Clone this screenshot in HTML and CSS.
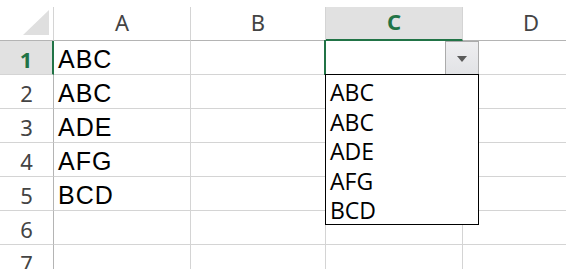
FILE: index.html
```html
<!DOCTYPE html>
<html lang="en">
<head>
  <meta charset="UTF-8" />
  <title>Dropdown list</title>
  <link rel="stylesheet" href="styles.css">
</head>
<body>

<div class="sheet">
  <div class="corner">
    <svg width="27" height="26" viewBox="0 0 27 26"><polygon points="26,0 26,25 0,25" fill="#dfdfdf"/></svg>
  </div>
  <div class="colh">A</div>
  <div class="colh">B</div>
  <div class="colh on">C</div>
  <div class="colh last">D</div>

  <div class="rowh on">1</div>
  <div class="cell">ABC</div>
  <div class="cell"></div>
  <div class="cell active">
    <div class="dd-btn">
      <svg width="10" height="6" viewBox="0 0 10 6"><polygon points="0,0 10,0 5,6" fill="#5a5a5a"/></svg>
    </div>
    <ul class="dd-list">
      <li>ABC</li>
      <li>ABC</li>
      <li>ADE</li>
      <li>AFG</li>
      <li>BCD</li>
    </ul>
  </div>
  <div class="cell last"></div>

  <div class="rowh">2</div>
  <div class="cell">ABC</div>
  <div class="cell"></div>
  <div class="cell"></div>
  <div class="cell last"></div>

  <div class="rowh">3</div>
  <div class="cell">ADE</div>
  <div class="cell"></div>
  <div class="cell"></div>
  <div class="cell last"></div>

  <div class="rowh">4</div>
  <div class="cell">AFG</div>
  <div class="cell"></div>
  <div class="cell"></div>
  <div class="cell last"></div>

  <div class="rowh">5</div>
  <div class="cell">BCD</div>
  <div class="cell"></div>
  <div class="cell"></div>
  <div class="cell last"></div>

  <div class="rowh">6</div>
  <div class="cell"></div>
  <div class="cell"></div>
  <div class="cell"></div>
  <div class="cell last"></div>

  <div class="rowh">7</div>
  <div class="cell"></div>
  <div class="cell"></div>
  <div class="cell"></div>
  <div class="cell last"></div>
</div>

</body>
</html>
```

FILE: styles.css
```css
body { margin: 0; padding-top: 7px; background: #fff; overflow: hidden; }
.sheet { display: grid; grid-template-columns: 54px 137px 135px 137px 137px; grid-template-rows: repeat(8, 34px); }
.sheet > div { box-sizing: border-box; border-right: 1px solid #d4d4d4; border-bottom: 1px solid #d4d4d4; }

.corner { display: flex; align-items: flex-end; justify-content: flex-end; padding: 0 3px 4px 0; }
.sheet > .corner, .sheet > .colh { border-bottom-color: #b4b4b4; }
.colh { display: flex; align-items: flex-end; justify-content: center; padding-bottom: 5px; font-family: "Noto Sans", sans-serif; font-size: 22px; line-height: 26px; color: #444; }
.colh.on { background: #e1e1e1; color: #217346; font-weight: bold; }
.sheet > .colh.on { border-bottom: 2px solid #217346; }

.rowh { display: flex; align-items: flex-end; justify-content: center; padding-bottom: 1px; font-family: "Noto Sans", sans-serif; font-size: 22px; line-height: 28px; color: #444; }
.sheet > .rowh { border-right-color: #b4b4b4; }
.rowh.on { background: #e1e1e1; color: #217346; font-weight: bold; }
.sheet > .rowh.on { border-right: 2px solid #217346; }

.cell { display: flex; align-items: flex-end; padding: 0 0 1px 4px; font-family: "Liberation Sans", Arial, sans-serif; font-size: 25px; letter-spacing: 1px; line-height: 28px; color: #000; }

.cell.active { position: relative; }
.cell.active::before { content: ""; position: absolute; left: -2px; top: -1px; bottom: -1px; width: 2px; background: #217346; }

.dd-btn { position: absolute; left: 119px; top: 0; width: 34px; height: 33px; box-sizing: border-box; border: 1px solid #ababab; border-bottom: none; background: linear-gradient(#eeeef0, #e2e3e6); display: flex; align-items: center; justify-content: center; z-index: 2; }
.dd-btn svg { margin-top: 1px; }

.dd-list { position: absolute; left: -1px; top: 33px; width: 154px; height: 151px; box-sizing: border-box; margin: 0; padding: 2px 0 0; list-style: none; border: 1px solid #000; background: #fff; z-index: 3; font-family: "Open Sans", sans-serif; font-size: 23px; letter-spacing: 0; color: #000; }
.dd-list li { height: 29.6px; line-height: 30px; padding-left: 4px; }
```
